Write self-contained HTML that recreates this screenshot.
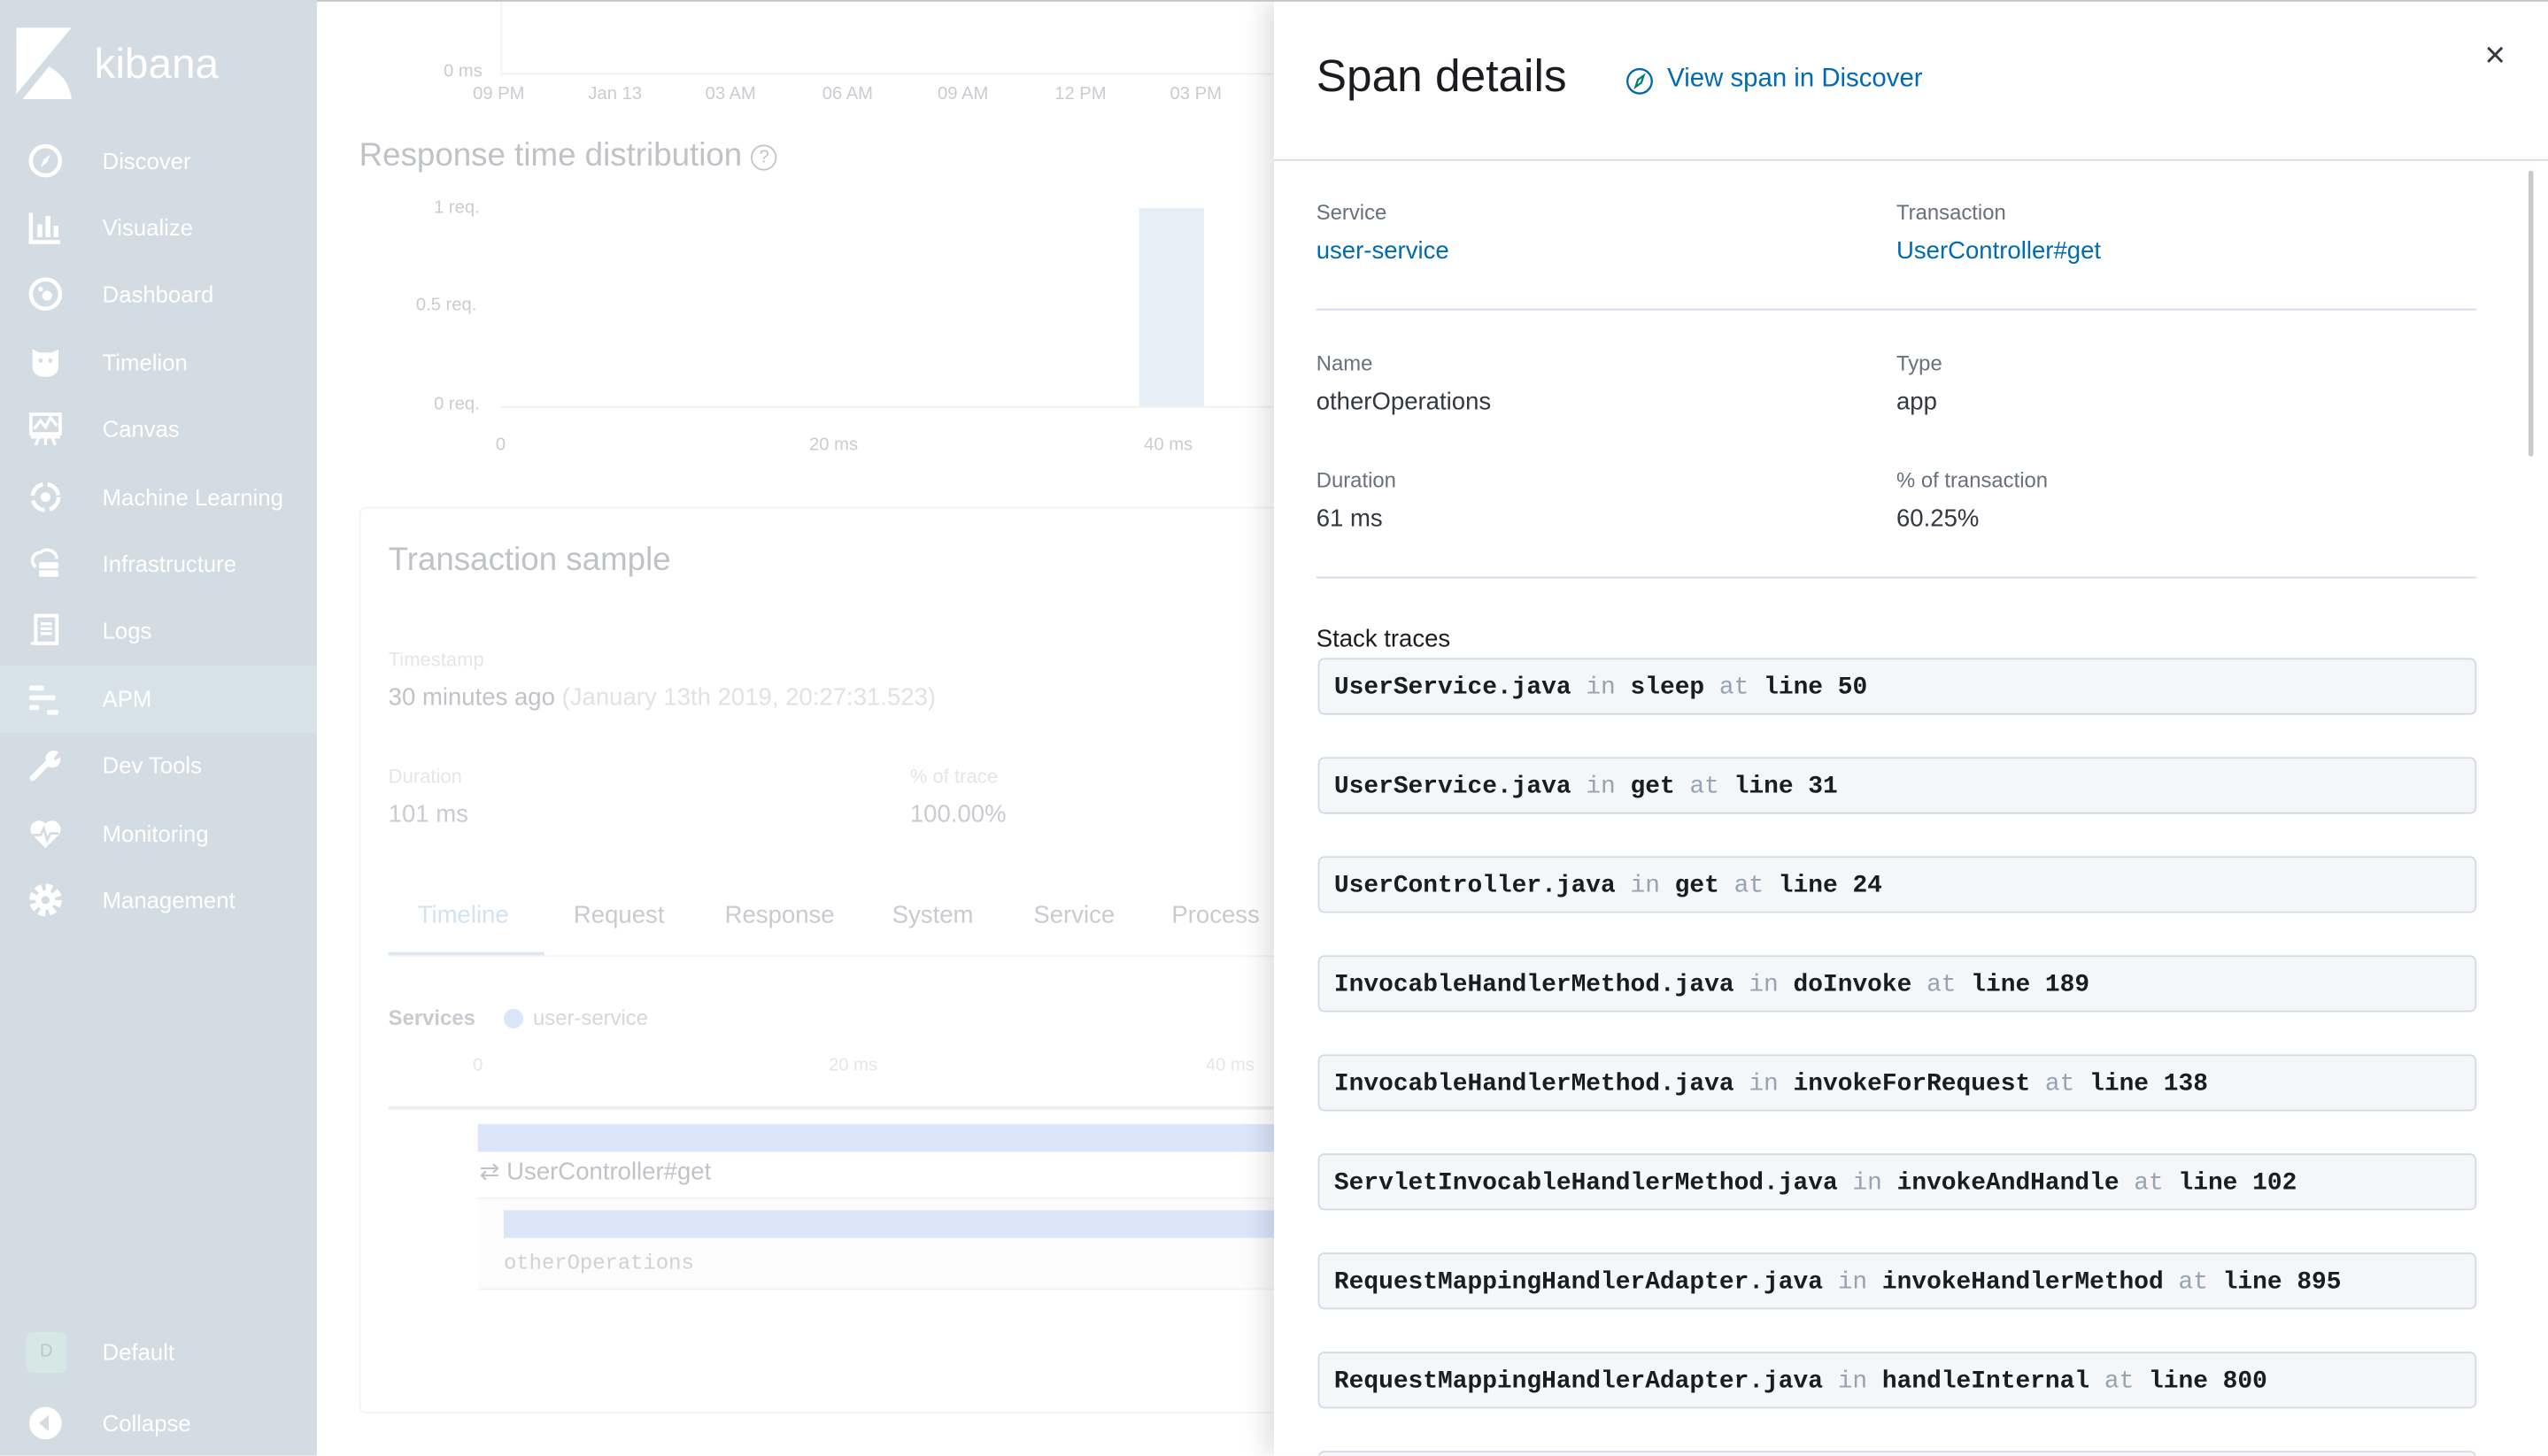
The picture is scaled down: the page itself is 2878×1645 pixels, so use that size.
<!DOCTYPE html>
<html><head><meta charset="utf-8">
<style>
*{box-sizing:border-box;margin:0;padding:0}
html,body{width:2878px;height:1644px;overflow:hidden;background:#fff}
#w{position:absolute;left:0;top:0;width:1568px;height:896px;transform:scale(1.83546);transform-origin:0 0;font-family:"Liberation Sans",sans-serif;overflow:hidden}
.abs{position:absolute;white-space:nowrap}
#side{position:absolute;left:0;top:0;width:195px;height:896px;background:#d3dce2}
.nav{position:absolute;left:0;width:195px;height:41px;color:#fff;font-size:14px}
.nav span{position:absolute;left:63px;top:12px}
.nav svg{position:absolute;left:17px;top:9px}
.f{color:#c9ccd0}
#main{position:absolute;left:195px;top:0;width:600px;height:896px;background:#fff}
#fly{position:absolute;left:784px;top:0;width:784px;height:896px;background:#fff;box-shadow:-6px 0 14px rgba(0,0,0,.12);border-top:1px solid #c5c5c5}
.lbl{font-size:13px;color:#69707d}
.val{font-size:15px;color:#343741}
.lnk{font-size:15px;color:#006bb4}
.st{position:absolute;left:27px;width:713px;height:35px;background:#f5f6f7;border:1px solid #d3dae6;border-radius:4px;font-family:"Liberation Mono",monospace;font-weight:bold;font-size:15.2px;color:#1a1c21;padding:8px 9px;white-space:nowrap}
.st em{font-style:normal;font-weight:normal;color:#98a2b3}
.ax{position:absolute;top:52px;font-size:11px;color:#c9ccd0;white-space:nowrap}
.tb{position:absolute;top:555px;font-size:15px;color:#c8cbcf;white-space:nowrap}
</style></head><body><div id="w">
<div id="main">
<div style="position:absolute;left:113px;top:0;width:1px;height:46px;background:#f3f3f3"></div>
<div style="position:absolute;left:113px;top:45px;width:480px;height:1px;background:#f0f0f0"></div>
<div class="abs f" style="left:78px;top:38px;font-size:11px">0 ms</div>
<div class="ax" style="left:96px">09 PM</div>
<div class="ax" style="left:167px">Jan 13</div>
<div class="ax" style="left:239px">03 AM</div>
<div class="ax" style="left:311px">06 AM</div>
<div class="ax" style="left:382px">09 AM</div>
<div class="ax" style="left:454px">12 PM</div>
<div class="ax" style="left:525px">03 PM</div>
<div class="abs" style="left:26px;top:85px;font-size:20px;color:#bfc2c6">Response time distribution <span style="display:inline-block;width:16px;height:16px;border:1px solid #c5c5c5;border-radius:50%;font-size:11px;text-align:center;line-height:14px;vertical-align:middle">?</span></div>
<div class="abs f" style="left:72px;top:122px;font-size:11px">1 req.</div>
<div class="abs f" style="left:61px;top:182px;font-size:11px">0.5 req.</div>
<div class="abs f" style="left:72px;top:243px;font-size:11px">0 req.</div>
<div style="position:absolute;left:113px;top:250px;width:480px;height:1px;background:#f0f0f0"></div>
<div style="position:absolute;left:506px;top:128px;width:40px;height:122px;background:#e6eff6"></div>
<div class="abs f" style="left:110px;top:268px;font-size:11px">0</div>
<div class="abs f" style="left:303px;top:268px;font-size:11px">20 ms</div>
<div class="abs f" style="left:509px;top:268px;font-size:11px">40 ms</div>
<div style="position:absolute;left:26px;top:312px;width:600px;height:558px;border:1px solid #f3f4f6;border-radius:4px"></div>
<div class="abs" style="left:44px;top:334px;font-size:20px;color:#bfc2c6">Transaction sample</div>
<div class="abs" style="left:44px;top:399px;font-size:12px;color:#e4e6e9">Timestamp</div>
<div class="abs" style="left:44px;top:421px;font-size:15px;color:#c0c3c7">30 minutes ago <span style="color:#e0e2e5">(January 13th 2019, 20:27:31.523)</span></div>
<div class="abs" style="left:44px;top:471px;font-size:12px;color:#e4e6e9">Duration</div>
<div class="abs" style="left:365px;top:471px;font-size:12px;color:#e4e6e9">% of trace</div>
<div class="abs" style="left:44px;top:493px;font-size:15px;color:#c8cbcf">101 ms</div>
<div class="abs" style="left:365px;top:493px;font-size:15px;color:#c8cbcf">100.00%</div>
<div class="tb" style="left:62px;color:#d3e2ef">Timeline</div>
<div class="tb" style="left:158px">Request</div>
<div class="tb" style="left:251px">Response</div>
<div class="tb" style="left:354px">System</div>
<div class="tb" style="left:441px">Service</div>
<div class="tb" style="left:526px">Process</div>
<div style="position:absolute;left:44px;top:588px;width:560px;height:1px;background:#f3f4f6"></div>
<div style="position:absolute;left:44px;top:586px;width:96px;height:2px;background:#dde8f2"></div>
<div class="abs" style="left:44px;top:619px;font-size:13px;color:#c8cbcf;font-weight:bold">Services</div>
<div style="position:absolute;left:115px;top:621px;width:12px;height:12px;border-radius:50%;background:#dbe6fb"></div>
<div class="abs" style="left:133px;top:619px;font-size:13px;color:#d5d8db">user-service</div>
<div class="abs" style="left:96px;top:650px;font-size:11px;color:#e4e6e9">0</div>
<div class="abs" style="left:315px;top:650px;font-size:11px;color:#e4e6e9">20 ms</div>
<div class="abs" style="left:547px;top:650px;font-size:11px;color:#e4e6e9">40 ms</div>
<div style="position:absolute;left:44px;top:681px;width:560px;height:2px;background:#eceef0"></div>
<div style="position:absolute;left:99px;top:692px;width:500px;height:17px;background:#dbe6fb"></div>
<div class="abs" style="left:100px;top:712px;font-size:15px;color:#c0c3c7">⇄ UserController#get</div>
<div style="position:absolute;left:99px;top:737px;width:500px;height:57px;background:#fcfcfc;border-top:1px solid #f3f3f3;border-bottom:1px solid #f3f3f3"></div>
<div style="position:absolute;left:115px;top:745px;width:480px;height:17px;background:#dbe6fb"></div>
<div class="abs" style="left:115px;top:770px;font-size:13px;color:#cfd2d5;font-family:'Liberation Mono',monospace">otherOperations</div>
</div>

<div id="side">
<svg style="position:absolute;left:10px;top:17px" width="36" height="44" viewBox="0 0 36 44"><path d="M0 0H34L0 41Z" fill="#fff"/><path d="M4 44L20 24C28 28 33 35 34 44Z" fill="#fff"/></svg>
<div class="abs" style="left:58px;top:24px;font-size:26px;color:#fff">kibana</div>
<div class="nav" style="top:79px"><svg width="22" height="22" viewBox="0 0 22 22"><circle cx="11" cy="11" r="9" fill="none" stroke="#fff" stroke-width="2.5"/><path d="M14 7L12 12 8 15 10 10Z" fill="#fff"/></svg><span>Discover</span></div>
<div class="nav" style="top:120px"><svg width="22" height="22" viewBox="0 0 22 22"><path d="M2 2V20H20" fill="none" stroke="#fff" stroke-width="2.5"/><rect x="6" y="9" width="3" height="8" fill="#fff"/><rect x="11" y="4" width="3" height="13" fill="#fff"/><rect x="16" y="10" width="3" height="7" fill="#fff"/></svg><span>Visualize</span></div>
<div class="nav" style="top:161px"><svg width="22" height="22" viewBox="0 0 22 22"><circle cx="11" cy="11" r="9" fill="none" stroke="#fff" stroke-width="2.5"/><circle cx="12" cy="12" r="3" fill="#fff"/><circle cx="8" cy="8" r="1.5" fill="#fff"/></svg><span>Dashboard</span></div>
<div class="nav" style="top:203px"><svg width="22" height="22" viewBox="0 0 22 22"><path d="M3 3L7 5H15L19 3V14C19 18 15 20 11 20 7 20 3 18 3 14Z" fill="#fff"/><circle cx="8" cy="10" r="1.3" fill="#d3dce2"/><circle cx="14" cy="10" r="1.3" fill="#d3dce2"/></svg><span>Timelion</span></div>
<div class="nav" style="top:244px"><svg width="22" height="22" viewBox="0 0 22 22"><rect x="2" y="2" width="18" height="12" fill="none" stroke="#fff" stroke-width="2"/><path d="M4 11L8 6 11 10 14 4 18 9M2 16H20M7 16L5 21M15 16L17 21M11 16V21" fill="none" stroke="#fff" stroke-width="1.8"/></svg><span>Canvas</span></div>
<div class="nav" style="top:286px"><svg width="22" height="22" viewBox="0 0 22 22"><circle cx="11" cy="11" r="8" fill="none" stroke="#fff" stroke-width="2.5" stroke-dasharray="10 3"/><circle cx="11" cy="11" r="3" fill="#fff"/></svg><span>Machine Learning</span></div>
<div class="nav" style="top:327px"><svg width="22" height="22" viewBox="0 0 22 22"><path d="M5 13A5 5 0 0 1 8 4 6 6 0 0 1 18 8" fill="none" stroke="#fff" stroke-width="2"/><rect x="7" y="10" width="12" height="4" rx="1" fill="#fff"/><rect x="7" y="15" width="12" height="4" rx="1" fill="#fff"/></svg><span>Infrastructure</span></div>
<div class="nav" style="top:368px"><svg width="22" height="22" viewBox="0 0 22 22"><rect x="5" y="2" width="13" height="17" fill="none" stroke="#fff" stroke-width="2.2"/><path d="M8 7H15M8 10H15M8 13H15M2 19H12" stroke="#fff" stroke-width="1.8"/></svg><span>Logs</span></div>
<div class="nav" style="top:410px;background:#d8e3e9"><svg width="22" height="22" viewBox="0 0 22 22"><rect x="1" y="3" width="9" height="3" rx="1" fill="#fff"/><rect x="1" y="9" width="16" height="3" rx="1" fill="#fff"/><rect x="1" y="15" width="6" height="3" rx="1" fill="#fff"/><rect x="12" y="18" width="7" height="3" rx="1" fill="#fff"/></svg><span>APM</span></div>
<div class="nav" style="top:451px"><svg width="22" height="22" viewBox="0 0 22 22"><path d="M3 19L12 10" stroke="#fff" stroke-width="3.5" stroke-linecap="round"/><path d="M12 10A5 5 0 0 1 19 3L16 7 17 8 20 6A5 5 0 0 1 13 12Z" fill="#fff"/></svg><span>Dev Tools</span></div>
<div class="nav" style="top:493px"><svg width="22" height="22" viewBox="0 0 22 22"><path d="M11 20L3 12A5 5 0 0 1 11 5 5 5 0 0 1 19 12Z" fill="#fff"/><path d="M3 12H8L10 8 12 15 14 11H19" fill="none" stroke="#d3dce2" stroke-width="1.5"/></svg><span>Monitoring</span></div>
<div class="nav" style="top:534px"><svg width="22" height="22" viewBox="0 0 22 22"><circle cx="11" cy="11" r="8" fill="none" stroke="#fff" stroke-width="4" stroke-dasharray="4 2.3"/><circle cx="11" cy="11" r="6" fill="#fff"/><circle cx="11" cy="11" r="2.5" fill="#d3dce2"/></svg><span>Management</span></div>
<div class="nav" style="top:812px"><div style="position:absolute;left:16px;top:8px;width:25px;height:25px;border-radius:4px;background:#d6e8e6;color:#b8c8c6;font-size:11px;text-align:center;line-height:25px">D</div><span>Default</span></div>
<div class="nav" style="top:856px"><svg width="22" height="22" viewBox="0 0 22 22"><circle cx="11" cy="11" r="10" fill="#fff"/><path d="M13 6L7 11 13 16Z" fill="#d3dce2"/></svg><span>Collapse</span></div>
</div>

<div id="fly">
<div class="abs" style="left:26px;top:30px;font-size:28px;color:#1a1c21">Span details</div>
<svg class="abs" style="left:216px;top:40px" width="18" height="18" viewBox="0 0 18 18"><circle cx="9" cy="9" r="7.5" fill="none" stroke="#006bb4" stroke-width="1.3"/><path d="M11.5 5.5L10 10 6.5 12.5 8 8Z" fill="none" stroke="#017d73" stroke-width="1.2"/></svg>
<div class="abs" style="left:242px;top:39px;font-size:16px;color:#006bb4">View span in Discover</div>
<div class="abs" style="left:745px;top:20px;font-size:22px;color:#343741">×</div>
<div style="position:absolute;left:0;top:97px;width:784px;height:1px;background:#d3dae6"></div>
<div style="position:absolute;left:772px;top:104px;width:3px;height:176px;background:#c7c9cc;border-radius:2px"></div>
<div class="abs lbl" style="left:26px;top:122px">Service</div>
<div class="abs lbl" style="left:383px;top:122px">Transaction</div>
<div class="abs lnk" style="left:26px;top:145px">user-service</div>
<div class="abs lnk" style="left:383px;top:145px">UserController#get</div>
<div style="position:absolute;left:26px;top:189px;width:714px;height:1px;background:#d3dae6"></div>
<div class="abs lbl" style="left:26px;top:215px">Name</div>
<div class="abs lbl" style="left:383px;top:215px">Type</div>
<div class="abs val" style="left:26px;top:238px">otherOperations</div>
<div class="abs val" style="left:383px;top:238px">app</div>
<div class="abs lbl" style="left:26px;top:287px">Duration</div>
<div class="abs lbl" style="left:383px;top:287px">% of transaction</div>
<div class="abs val" style="left:26px;top:310px">61 ms</div>
<div class="abs val" style="left:383px;top:310px">60.25%</div>
<div style="position:absolute;left:26px;top:354px;width:714px;height:1px;background:#d3dae6"></div>
<div class="abs" style="left:26px;top:384px;font-size:15px;color:#1a1c21">Stack traces</div>
<div class="st" style="top:404px">UserService.java <em>in</em> sleep <em>at</em> line 50</div>
<div class="st" style="top:465px">UserService.java <em>in</em> get <em>at</em> line 31</div>
<div class="st" style="top:526px">UserController.java <em>in</em> get <em>at</em> line 24</div>
<div class="st" style="top:587px">InvocableHandlerMethod.java <em>in</em> doInvoke <em>at</em> line 189</div>
<div class="st" style="top:648px">InvocableHandlerMethod.java <em>in</em> invokeForRequest <em>at</em> line 138</div>
<div class="st" style="top:709px">ServletInvocableHandlerMethod.java <em>in</em> invokeAndHandle <em>at</em> line 102</div>
<div class="st" style="top:770px">RequestMappingHandlerAdapter.java <em>in</em> invokeHandlerMethod <em>at</em> line 895</div>
<div class="st" style="top:831px">RequestMappingHandlerAdapter.java <em>in</em> handleInternal <em>at</em> line 800</div>
<div class="st" style="top:892px"></div>
</div>
<div style="position:absolute;left:195px;top:0;width:589px;height:1px;background:#c5c5c5"></div>
</div></body></html>
